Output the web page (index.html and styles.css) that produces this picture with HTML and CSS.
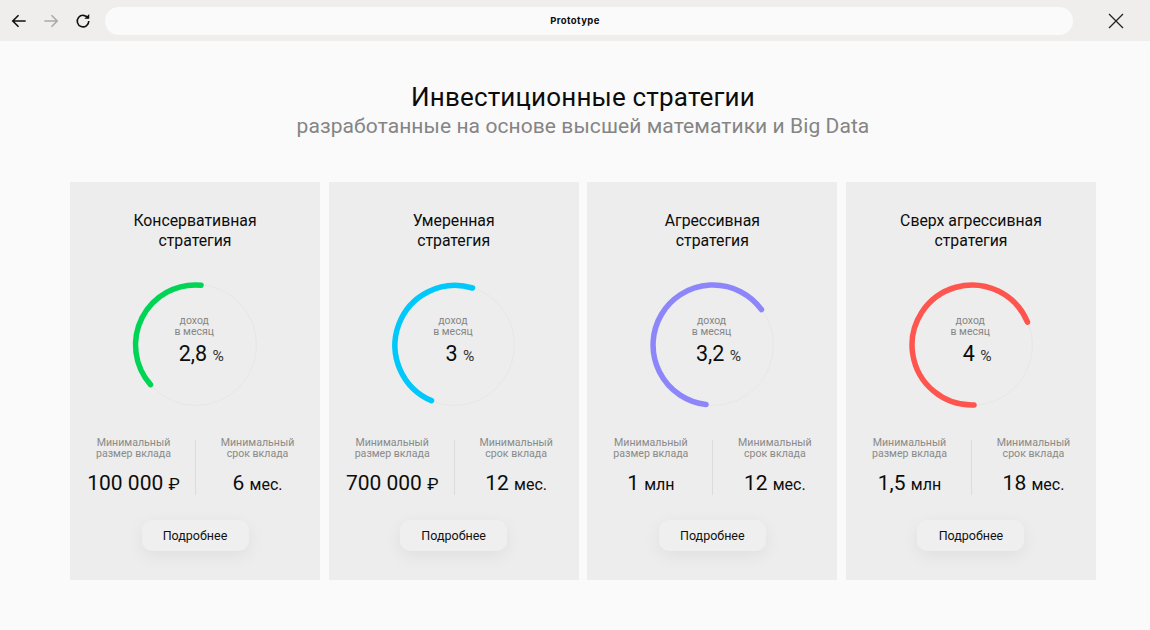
FILE: index.html
```html
<!DOCTYPE html>
<html lang="ru">
<head>
	<meta charset="UTF-8">
	<title>Инвестиционные стратегии</title>
	<link rel="stylesheet" href="styles.css">
</head>
<body>
	<div class="topbar">
		<div class="nav">
			<svg class="nav-icon" viewBox="0 0 18 18"><path d="M16.500 9H2M8.500 2.500 2 9l6.500 6.500"/></svg>
			<svg class="nav-icon nav-off" viewBox="0 0 18 18"><path d="M1.500 9H16M9.500 2.500 16 9l-6.500 6.500"/></svg>
			<svg class="nav-icon" viewBox="0 0 18 18"><path d="M14.600 5.800A6.500 6.500 0 1 0 15.500 9"/><path class="nav-fill" d="M10.500 6.500h5.500V1z"/></svg>
		</div>
		<div class="address">Prototype</div>
		<svg class="close-icon" viewBox="0 0 16 16"><path d="M1 1l14 14M15 1 1 15"/></svg>
	</div>

	<div class="heading">
		<h1>Инвестиционные стратегии</h1>
		<p>разработанные на основе высшей математики и Big Data</p>
	</div>

	<div class="cards">
		<div class="card">
			<h2>Консервативная<br>стратегия</h2>
			<div class="ring">
				<svg viewBox="0 0 128 128"><circle class="ring-bg" cx="64" cy="64" r="60.500"/><path class="ring-bar green" d="M18.500 103.600A60 60 0 0 1 69 4.200"/></svg>
				<div class="ring-text">
					<span>доход<br>в месяц</span>
					<div class="rate">2,8 <small>%</small></div>
				</div>
			</div>
			<div class="stats">
				<div class="stat">
					<span>Минимальный<br>размер вклада</span>
					<div class="value">100 000 <small class="rub">₽</small></div>
				</div>
				<div class="stat">
					<span>Минимальный<br>срок вклада</span>
					<div class="value">6 <small>мес.</small></div>
				</div>
			</div>
			<button>Подробнее</button>
		</div>

		<div class="card">
			<h2>Умеренная<br>стратегия</h2>
			<div class="ring">
				<svg viewBox="0 0 128 128"><circle class="ring-bg" cx="64" cy="64" r="60.500"/><path class="ring-bar blue" d="M41.500 119.600A60 60 0 0 1 82.500 7"/></svg>
				<div class="ring-text">
					<span>доход<br>в месяц</span>
					<div class="rate">3 <small>%</small></div>
				</div>
			</div>
			<div class="stats">
				<div class="stat">
					<span>Минимальный<br>размер вклада</span>
					<div class="value">700 000 <small class="rub">₽</small></div>
				</div>
				<div class="stat">
					<span>Минимальный<br>срок вклада</span>
					<div class="value">12 <small>мес.</small></div>
				</div>
			</div>
			<button>Подробнее</button>
		</div>

		<div class="card">
			<h2>Агрессивная<br>стратегия</h2>
			<div class="ring">
				<svg viewBox="0 0 128 128"><circle class="ring-bg" cx="64" cy="64" r="60.500"/><path class="ring-bar purple" d="M57 123.600A60 60 0 1 1 112.500 28.600"/></svg>
				<div class="ring-text">
					<span>доход<br>в месяц</span>
					<div class="rate">3,2 <small>%</small></div>
				</div>
			</div>
			<div class="stats">
				<div class="stat">
					<span>Минимальный<br>размер вклада</span>
					<div class="value">1 <small>млн</small></div>
				</div>
				<div class="stat">
					<span>Минимальный<br>срок вклада</span>
					<div class="value">12 <small>мес.</small></div>
				</div>
			</div>
			<button>Подробнее</button>
		</div>

		<div class="card">
			<h2>Сверх агрессивная<br>стратегия</h2>
			<div class="ring">
				<svg viewBox="0 0 128 128"><circle class="ring-bg" cx="64" cy="64" r="60.500"/><path class="ring-bar red" d="M66 124A60 60 0 1 1 119.500 41.100"/></svg>
				<div class="ring-text">
					<span>доход<br>в месяц</span>
					<div class="rate">4 <small>%</small></div>
				</div>
			</div>
			<div class="stats">
				<div class="stat">
					<span>Минимальный<br>размер вклада</span>
					<div class="value">1,5 <small>млн</small></div>
				</div>
				<div class="stat">
					<span>Минимальный<br>срок вклада</span>
					<div class="value">18 <small>мес.</small></div>
				</div>
			</div>
			<button>Подробнее</button>
		</div>
	</div>
</body>
</html>
```

FILE: styles.css
```css
body {
	margin: 0;
	height: 630px;
	overflow: hidden;
	font-family: Roboto, "Liberation Sans", sans-serif;
	background-color: #fafafa;
	color: #0c0c0c;
}
.topbar {
	display: flex;
	align-items: center;
	height: 41px;
	background-color: #efeeed;
}
.nav {
	display: flex;
	gap: 16px;
	margin-left: 11px;
	margin-right: 14px;
}
.nav-icon {
	width: 16px;
	height: 16px;
	fill: none;
	stroke: #111;
	stroke-width: 1.800;
}
.nav-off {
	stroke: #aaa;
}
.nav-fill {
	fill: #111;
	stroke: none;
}
.address {
	width: 968px;
	height: 28px;
	padding-right: 28px;
	box-sizing: border-box;
	line-height: 28px;
	border-radius: 14px;
	background-color: #fafafa;
	text-align: center;
	font-family: Inter, sans-serif;
	font-size: 9.500px;
	font-weight: 700;
	letter-spacing: 0.4px;
}
.close-icon {
	width: 16px;
	height: 16px;
	margin-left: 35px;
	fill: none;
	stroke: #222;
	stroke-width: 1.300;
}
.heading {
	margin-top: 41px;
	padding-left: 16px;
	text-align: center;
}
.heading h1 {
	margin: 0;
	font-size: 26px;
	line-height: 30px;
	font-weight: 400;
	letter-spacing: 0.17px;
}
.heading p {
	margin: 0;
	font-size: 21px;
	line-height: 28px;
	color: #858585;
	letter-spacing: 0.08px;
}
.cards {
	display: grid;
	grid-template-columns: repeat(4, 250px);
	gap: 8.670px;
	margin: 42px 0 0 70px;
}
.card {
	display: flex;
	flex-direction: column;
	align-items: center;
	height: 398px;
	padding-top: 28.500px;
	box-sizing: border-box;
	background-color: #ecedec;
}
.card h2 {
	margin: 0;
	font-size: 15.800px;
	line-height: 20px;
	font-weight: 400;
	text-align: center;
}
.ring {
	position: relative;
	width: 128px;
	height: 128px;
	margin: 30px 0 0 1.500px;
}
.ring svg {
	display: block;
	fill: none;
	overflow: visible;
}
.ring-bg {
	stroke: #e7e7e7;
	stroke-width: 1;
}
.ring-bar {
	stroke-width: 5.500;
	stroke-linecap: round;
}
.green { stroke: #00d455; }
.blue { stroke: #00c8fa; }
.purple { stroke: #8d86fb; }
.red { stroke: #fe564e; }
.ring-text {
	position: absolute;
	top: 34px;
	left: 0;
	width: 100%;
	text-align: center;
}
.ring-text span {
	display: block;
	padding-right: 3px;
	font-size: 10.500px;
	line-height: 11.500px;
	color: #868686;
}
.rate {
	margin-top: 4px;
	padding-left: 11px;
	font-size: 21.500px;
	line-height: 24px;
}
.rate small {
	font-size: 15.500px;
	color: #333;
}
.stats {
	display: grid;
	grid-template-columns: 1fr 1fr;
	width: 100%;
	margin-top: 31.500px;
}
.stat {
	height: 55px;
	text-align: center;
}
.stat:first-child {
	padding-left: 2px;
}
.stat + .stat {
	border-left: 1px solid #dcdcdc;
	padding-right: 1px;
}
.stat span {
	display: block;
	margin-top: -3px;
	font-size: 10.600px;
	line-height: 11px;
	color: #8a8a8a;
}
.value {
	margin-top: 12px;
	font-size: 21px;
	line-height: 24px;
}
.value small {
	font-size: 16px;
}
.value .rub {
	font-size: 17px;
}
.card button {
	width: 107px;
	height: 31px;
	margin-top: 25px;
	border: none;
	border-radius: 10px;
	background-color: #f0efef;
	box-shadow: 0 5px 18px rgba(0, 0, 0, 0.06);
	font-family: inherit;
	font-size: 12.500px;
	color: #111;
}
```
